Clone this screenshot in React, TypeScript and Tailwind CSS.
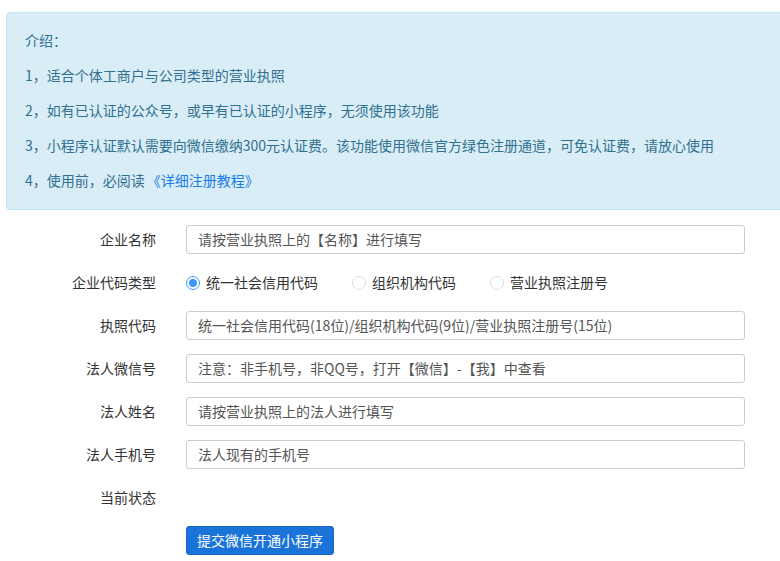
import React from "react";

const font = { fontFamily: '"Noto Sans CJK SC", "Liberation Sans", sans-serif' };

function Row({ label, children }: { label: string; children?: React.ReactNode }) {
  return (
    <div className="flex items-center h-[43px]">
      <div className="w-[156px] text-right text-[14px] text-[#333] shrink-0">{label}</div>
      <div className="ml-[30px] w-[559px] flex items-center">{children}</div>
    </div>
  );
}

function Input({ ph }: { ph: string }) {
  return (
    <div className="w-full h-[29px] border border-[#ccc] rounded-[3px] flex items-center px-[11px] text-[14px] text-[#555] bg-white">
      {ph}
    </div>
  );
}

function Radio({ on, label }: { on?: boolean; label: string }) {
  return (
    <div className="flex items-center mr-[34px]">
      <span
        className={`w-[14px] h-[14px] rounded-full border flex items-center justify-center mr-[6px] ${on ? "border-[#3b99fc]" : "border-[#ddd]"}`}
      >
        {on && <span className="w-[8px] h-[8px] rounded-full bg-[#3b99fc]" />}
      </span>
      <span className="text-[14px] text-[#333]">{label}</span>
    </div>
  );
}

export default function App() {
  return (
    <div className="w-[780px] h-[561px] bg-white overflow-hidden" style={font}>
      <div className="mt-[12px] ml-[6px] w-[790px] h-[198px] bg-[#d9edf7] border border-[#bce8f1] rounded-[4px] pl-[18px] pt-[10px] text-[14px] text-[#31708f]">
        <div className="h-[35px] flex items-center">介绍：</div>
        <div className="h-[35px] flex items-center">1，适合个体工商户与公司类型的营业执照</div>
        <div className="h-[35px] flex items-center">2，如有已认证的公众号，或早有已认证的小程序，无须使用该功能</div>
        <div className="h-[35px] flex items-center">3，小程序认证默认需要向微信缴纳300元认证费。该功能使用微信官方绿色注册通道，可免认证费，请放心使用</div>
        <div className="h-[35px] flex items-center">
          4，使用前，必阅读 <span className="text-[#1a7ce6] ml-[2px]">《详细注册教程》</span>
        </div>
      </div>
      <div className="mt-[8px]">
        <Row label="企业名称"><Input ph="请按营业执照上的【名称】进行填写" /></Row>
        <Row label="企业代码类型">
          <Radio on label="统一社会信用代码" />
          <Radio label="组织机构代码" />
          <Radio label="营业执照注册号" />
        </Row>
        <Row label="执照代码"><Input ph="统一社会信用代码(18位)/组织机构代码(9位)/营业执照注册号(15位)" /></Row>
        <Row label="法人微信号"><Input ph="注意：非手机号，非QQ号，打开【微信】-【我】中查看" /></Row>
        <Row label="法人姓名"><Input ph="请按营业执照上的法人进行填写" /></Row>
        <Row label="法人手机号"><Input ph="法人现有的手机号" /></Row>
        <Row label="当前状态" />
        <Row label="">
          <button className="h-[29px] px-[10px] bg-[#1a73d9] border border-[#1666c2] rounded-[3px] text-white text-[14px]">
            提交微信开通小程序
          </button>
        </Row>
      </div>
    </div>
  );
}
